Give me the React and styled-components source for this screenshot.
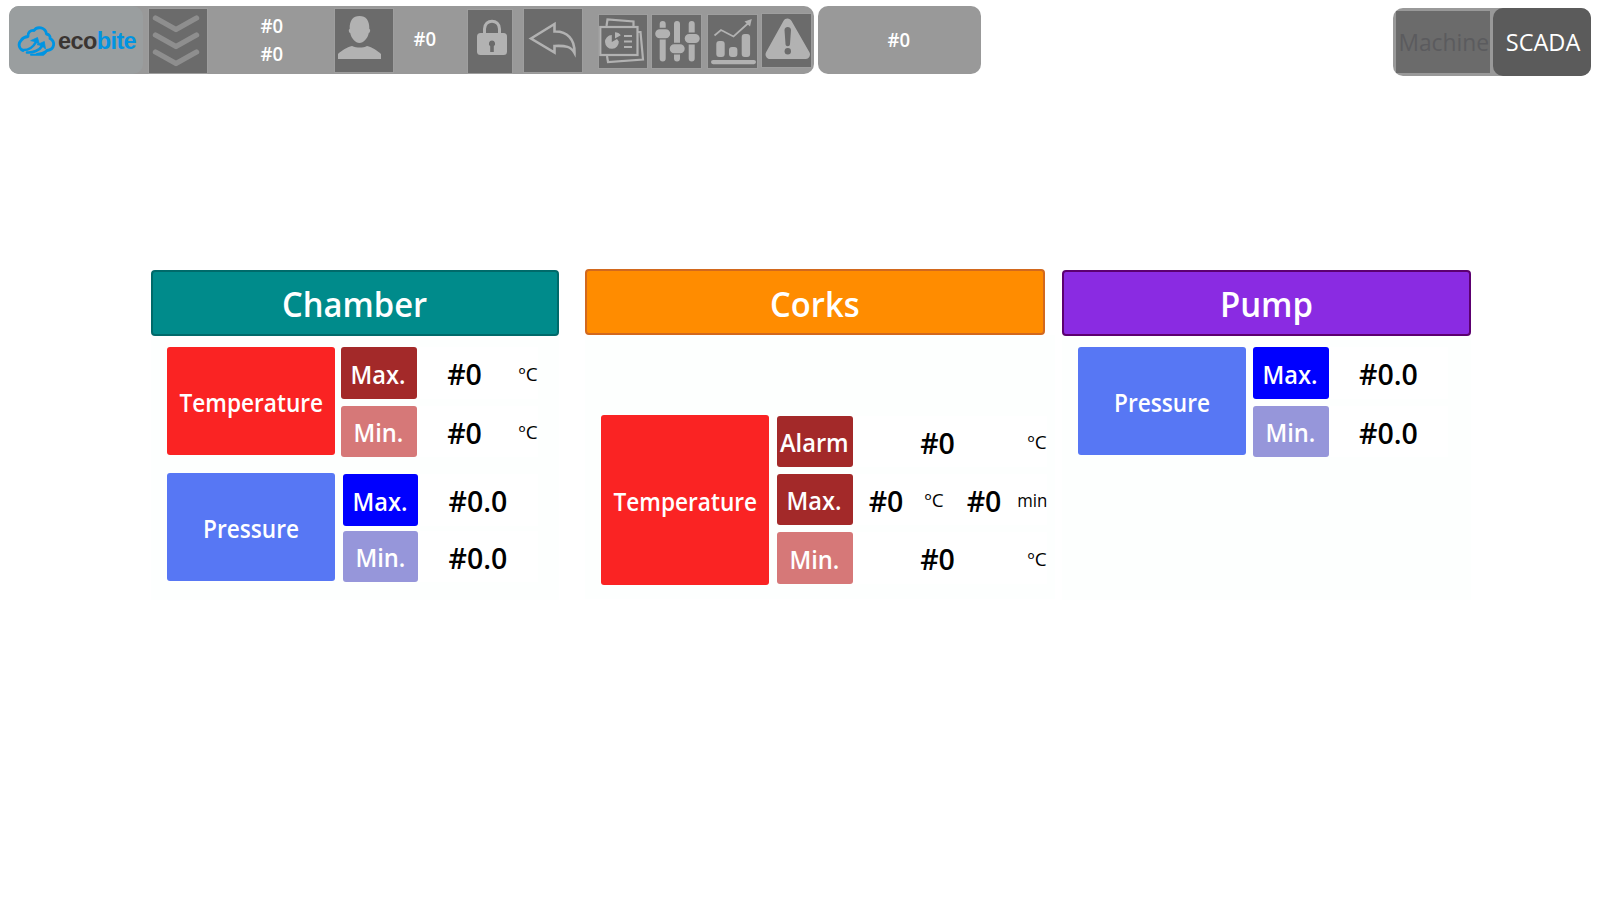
import React from "react";
import styled, { createGlobalStyle } from "styled-components";

const Global = createGlobalStyle`
  * { box-sizing: border-box; }
  body { margin: 0; background: #fff; font-family: "Open Sans", "Noto Sans", sans-serif; }
`;

const Screen = styled.div`
  width: 1600px;
  height: 900px;
  overflow: hidden;
  background: #fff;
`;

const Header = styled.header`
  display: flex;
  align-items: flex-start;
  height: 76px;
  padding: 6px 9px 0;
`;

const Bar = styled.div`
  display: flex;
  align-items: flex-start;
  width: ${(p) => p.$w}px;
  height: 68px;
  border-radius: 10px;
  background: #999;
`;

const StatusBar = styled(Bar)`
  align-items: center;
  justify-content: center;
  margin-left: 4px;
  padding-right: 2px;
`;

const Logo = styled.div`
  display: flex;
  align-items: center;
  width: 134px;
  height: 68px;
  padding-left: 8px;
  border-radius: 10px;
  background: #9a9e9f;
`;

const Wordmark = styled.span`
  margin-left: 2px;
  padding-top: 2px;
  font: bold 23.5px/28px "Liberation Sans", sans-serif;
  letter-spacing: -0.6px;
  color: #3a3532;
  b { color: #0094e2; }
`;

const IconButton = styled.button`
  flex: none;
  width: ${(p) => p.$w}px;
  height: ${(p) => p.$h}px;
  margin: ${(p) => p.$top}px 0 0 ${(p) => p.$gap}px;
  padding: 0;
  border: 0;
  background: #6b6b6b;
  box-shadow: 0 0 0 1px #9e9e9e;
  svg { display: block; }
`;

const Readout = styled.div`
  display: flex;
  flex-direction: column;
  justify-content: center;
  align-items: center;
  width: ${(p) => p.$w}px;
  height: 66px;
  padding: ${(p) => p.$top || 0}px 0 0 1px;
`;

const Text = styled.span`
  display: block;
  flex: none;
  font-size: ${(p) => p.$size}px;
  font-weight: ${(p) => p.$weight || 600};
  line-height: ${(p) => p.$line || p.$size}px;
  color: ${(p) => p.$color || "#fff"};
  white-space: nowrap;
  transform: scaleX(${(p) => p.$fit || 1});
  transform-origin: ${(p) => p.$origin || "center"};
`;

const Modes = styled.div`
  display: flex;
  width: 198px;
  height: 68px;
  margin: 2px 0 0 auto;
  border-radius: 10px;
  background: #999;
`;

const Mode = styled.button`
  display: flex;
  flex: none;
  align-items: center;
  justify-content: center;
  width: ${(p) => (p.$active ? 98 : 94)}px;
  height: ${(p) => (p.$active ? 68 : 62)}px;
  margin: ${(p) => (p.$active ? "0 0 0 3px" : "3px 0 0 3px")};
  padding: 0 0 0 2px;
  border: 0;
  border-radius: ${(p) => (p.$active ? 10 : 0)}px;
  background: ${(p) => (p.$active ? "#5b5b5b" : "#6b6b6b")};
  font-family: inherit;
`;

const Main = styled.main`
  display: flex;
  align-items: flex-start;
  padding: 193px 0 0 151px;
`;

const Panel = styled.section`
  width: ${(p) => p.$w}px;
  height: 330px;
  margin: ${(p) => p.$top}px 0 0 ${(p) => p.$gap || 0}px;
`;

const PanelTitle = styled.h2`
  display: flex;
  align-items: center;
  justify-content: center;
  height: 66px;
  margin: 0;
  padding-top: ${(p) => p.$drop}px;
  border: 2px solid ${(p) => p.$edge};
  border-radius: 4px;
  background: ${(p) => p.$fill};
`;

const PanelBody = styled.div`
  padding: ${(p) => p.$top}px 0 0 16px;
  height: 264px;
  width: ${(p) => p.$w}px;
  background: #fdfffe;
`;

const Group = styled.div`
  display: flex;
  align-items: flex-start;
  margin-bottom: 16px;
`;

const Tile = styled.div`
  display: flex;
  flex: none;
  align-items: center;
  justify-content: center;
  width: 168px;
  height: ${(p) => p.$h}px;
  padding-top: 3px;
  border-radius: 3px;
  background: ${(p) => p.$fill};
`;

const Rows = styled.div`
  display: flex;
  flex-direction: column;
  margin: ${(p) => p.$top || 0}px 0 0 ${(p) => p.$gap}px;
  gap: ${(p) => p.$space}px;
`;

const Row = styled.div`
  display: flex;
  height: ${(p) => p.$h}px;
`;

const Tag = styled.div`
  display: flex;
  flex: none;
  align-items: center;
  justify-content: center;
  width: ${(p) => p.$w}px;
  padding: 2px 1px 0 0;
  border-radius: 3px;
  background: ${(p) => p.$fill};
`;

const Cell = styled.div`
  display: flex;
  align-items: center;
  justify-content: center;
  width: ${(p) => p.$w}px;
  padding-top: 3px;
  background: #fff;
`;

const Unit = styled(Cell)`
  justify-content: flex-end;
  padding: 3px 0 0 0;
`;

const RED = "#fa2323", BROWN = "#a32929", ROSE = "#d67878";
const SKY = "#5777f4", BLUE = "#0000ff", LAVENDER = "#9696da";

const Value = ({ w, children }) => (
  <Cell $w={w}><Text $size={28.5} $color="#000" $fit={1}>{children}</Text></Cell>
);
const UnitLabel = ({ w, fit = 1.08, children }) => (
  <Unit $w={w}><Text $size={17.5} $weight={400} $color="#000" $fit={fit} $origin="right">{children}</Text></Unit>
);
const TagLabel = ({ w = 76, fill, children }) => (
  <Tag $w={w} $fill={fill}><Text $size={25} $fit={0.945}>{children}</Text></Tag>
);
const Title = ({ fill, edge, fit = 0.935, drop = 1, children }) => (
  <PanelTitle $fill={fill} $edge={edge} $drop={drop}><Text $size={35} $fit={fit}>{children}</Text></PanelTitle>
);
const Quantity = ({ h, fill, children }) => (
  <Tile $h={h} $fill={fill}><Text $size={25} $fit={0.905}>{children}</Text></Tile>
);

const CloudLogo = () => (
  <svg width="39" height="33" viewBox="0 0 39 33" fill="none" stroke="#0094e2" strokeLinecap="round" strokeLinejoin="round">
    <path strokeWidth="2.8" d="M6 26.500C1.500 24.500 1 19.500 4 16.500C5.500 14 8 12.800 11 12.500C10.500 8.500 13.500 6 17 6.500C20 2 28.500 3 29.500 10C32.500 10.500 33.500 12.500 33 14.500C38.500 17.500 38 25.500 30 26.500" />
    <path strokeWidth="2.600" d="M5 26C11 26.500 16 23.500 19 18" />
    <path strokeWidth="2.600" d="M10 28.500C16 29 22.500 26.500 25.500 21.500" />
    <path strokeWidth="2" d="M14 30.800H26C28 29.500 29.500 28 30 26.500C27 28.500 24 29.500 20 30" />
    <path fill="#0094e2" strokeWidth="0.800" d="M14 16.500L20.500 13.500L22.500 20.500L19.800 18.800L17 17.500ZM20.500 20.500L27.300 17.500L28.500 25L26.300 23L23.500 21.500Z" />
  </svg>
);

const ChevronsIcon = () => (
  <svg width="58" height="64" viewBox="0 0 58 64" fill="none" stroke="#8e8e8e" strokeWidth="5.4" strokeLinecap="round" strokeLinejoin="round">
    <path d="M6.500 9L27 20.500L47.500 9M6.500 26L27 37.500L47.500 26M6.500 43L27 54.500L47.500 43" />
  </svg>
);

const UserIcon = () => (
  <svg width="58" height="63" viewBox="0 0 58 63" fill="#b2b2b2">
    <path d="M24.500 7C31 7 34.600 11.500 34.300 20C35.700 20 35.300 23.500 33.800 24C32.700 29.500 28.500 34 24.500 34C20.500 34 16.300 29.500 15.200 24C13.700 23.500 13.300 20 14.700 20C14.400 11.500 18 7 24.500 7Z" />
    <path d="M3 50V45C6 42 12 38 17 37C22 39 28 39 32 37C37 38 43 42 46 45V50Z" />
  </svg>
);

const LockIcon = () => (
  <svg width="44" height="63" viewBox="0 0 44 63">
    <path d="M16.500 24V19C16.500 8.500 31.500 8.500 31.500 19V24" fill="none" stroke="#b2b2b2" strokeWidth="3" />
    <rect x="9" y="23" width="30" height="22" rx="3.500" fill="#b2b2b2" />
    <path d="M24 30.500a3.200 3.200 0 0 1 1.800 5.800V42h-3.600v-5.700a3.200 3.200 0 0 1 1.800-5.800Z" fill="#6b6b6b" />
  </svg>
);

const BackIcon = () => (
  <svg width="58" height="63" viewBox="0 0 58 63" fill="none" stroke="#b2b2b2" strokeWidth="2.600">
    <path d="M7 29.500L30.500 15V22.500C43 22 51 30 50.500 44C47 37.500 42 36.500 30.500 37V43.500Z" />
  </svg>
);

const ReportIcon = () => (
  <svg width="48" height="53" viewBox="0 0 48 53" fill="none" stroke="#b2b2b2" strokeWidth="2.200">
    <path d="M7.500 11L8.500 4.500L34.500 6.500V11M39 17H41.500L44 44.500L9 47L8 41" />
    <rect x="1.300" y="12" width="37.200" height="28" />
    <path d="M25 21H33M25 26.500H33M25 32H33" />
    <path d="M12.800 20V27L18 24L19.800 26.500A6.900 6.900 0 1 1 12.800 20Z" fill="#b2b2b2" stroke="none" />
    <path d="M16 23.500V17.200C18.500 17.200 20.500 18.500 21.800 20.200Z" fill="#b2b2b2" stroke="none" />
  </svg>
);

const SlidersIcon = () => (
  <svg width="49" height="53" viewBox="0 0 49 53">
    <path d="M10.700 9V43.500M25 9V43.500M39.700 9V43.500" stroke="#b2b2b2" strokeWidth="6" strokeLinecap="round" />
    <g fill="#b2b2b2" stroke="#6b6b6b" strokeWidth="1.400">
      <rect x="2.500" y="13.500" width="16.400" height="10.400" rx="5.200" />
      <rect x="17" y="28.500" width="16.400" height="10.400" rx="5.200" />
      <rect x="32" y="18.300" width="16.400" height="10.400" rx="5.200" />
    </g>
  </svg>
);

const ChartIcon = () => (
  <svg width="49" height="53" viewBox="0 0 49 53" fill="#b2b2b2">
    <rect x="8.300" y="26" width="8.400" height="16" rx="3" />
    <rect x="21" y="32" width="8.400" height="10" rx="3" />
    <rect x="33.700" y="19" width="8.400" height="23" rx="3" />
    <rect x="3" y="45" width="45" height="4.200" rx="2.100" />
    <path d="M6.500 20.500L13 15L25.500 21.500L41 7.500" fill="none" stroke="#b2b2b2" strokeWidth="1.700" />
    <path d="M43.800 4L36.500 6.500L42 11.500Z" />
  </svg>
);

const WarningIcon = () => (
  <svg width="49" height="53" viewBox="0 0 49 53">
    <path d="M25.500 9L8 40.500H43.500Z" fill="#b2b2b2" stroke="#b2b2b2" strokeWidth="9" strokeLinejoin="round" />
    <path d="M22.500 16C22.500 12 29 12 29 16L28 30C28 33 23.500 33 23.500 30Z" fill="#6b6b6b" />
    <circle cx="25.800" cy="37.300" r="3.200" fill="#6b6b6b" />
  </svg>
);

export default function App() {
  return (
    <Screen>
      <Global />
      <Header>
        <Bar $w={805}>
          <Logo><CloudLogo /><Wordmark>eco<b>bite</b></Wordmark></Logo>
          <IconButton $w={58} $h={64} $top={3} $gap={6}><ChevronsIcon /></IconButton>
          <Readout $w={128} $top={2}>
            <Text $size={19.5} $line={28} $fit={0.95}>#0</Text>
            <Text $size={19.5} $line={28} $fit={0.95}>#0</Text>
          </Readout>
          <IconButton $w={58} $h={63} $top={3} $gap={0}><UserIcon /></IconButton>
          <Readout $w={62}><Text $size={19.5} $fit={0.95}>#0</Text></Readout>
          <IconButton $w={44} $h={63} $top={4} $gap={13}><LockIcon /></IconButton>
          <IconButton $w={58} $h={63} $top={3} $gap={12}><BackIcon /></IconButton>
          <IconButton $w={48} $h={53} $top={9} $gap={17}><ReportIcon /></IconButton>
          <IconButton $w={49} $h={53} $top={9} $gap={5}><SlidersIcon /></IconButton>
          <IconButton $w={49} $h={53} $top={9} $gap={7}><ChartIcon /></IconButton>
          <IconButton $w={49} $h={53} $top={8} $gap={5}><WarningIcon /></IconButton>
        </Bar>
        <StatusBar $w={163}><Text $size={19.5} $fit={0.95}>#0</Text></StatusBar>
        <Modes>
          <Mode><Text $size={24} $weight={400} $color="#5b5b5e" $fit={0.95}>Machine</Text></Mode>
          <Mode $active><Text $size={24} $weight={400} $fit={0.98}>SCADA</Text></Mode>
        </Modes>
      </Header>
      <Main>
        <Panel $w={408} $top={1}>
          <Title fill="#008b8b" edge="#006a6a">Chamber</Title>
          <PanelBody $w={408} $top={11}>
            <Group>
              <Quantity h={108} fill={RED}>Temperature</Quantity>
              <Rows $gap={6} $space={7}>
                <Row $h={52}><TagLabel fill={BROWN}>Max.</TagLabel><Value w={95}>#0</Value><UnitLabel w={26}>ºC</UnitLabel></Row>
                <Row $h={51}><TagLabel fill={ROSE}>Min.</TagLabel><Value w={95}>#0</Value><UnitLabel w={26}>ºC</UnitLabel></Row>
              </Rows>
            </Group>
            <Group>
              <Quantity h={108} fill={SKY}>Pressure</Quantity>
              <Rows $gap={8} $top={1} $space={5}>
                <Row $h={52}><TagLabel w={75} fill={BLUE}>Max.</TagLabel><Value w={120}>#0.0</Value></Row>
                <Row $h={51}><TagLabel w={75} fill={LAVENDER}>Min.</TagLabel><Value w={120}>#0.0</Value></Row>
              </Rows>
            </Group>
          </PanelBody>
        </Panel>
        <Panel $w={460} $gap={26} $top={0}>
          <Title fill="#ff8c00" edge="#d2691e" drop={3}>Corks</Title>
          <PanelBody $w={470} $top={80}>
            <Group>
              <Quantity h={170} fill={RED}>Temperature</Quantity>
              <Rows $gap={8} $top={1} $space={7}>
                <Row $h={51}><TagLabel fill={BROWN}>Alarm</TagLabel><Value w={169}>#0</Value><UnitLabel w={25}>ºC</UnitLabel></Row>
                <Row $h={51}>
                  <TagLabel fill={BROWN}>Max.</TagLabel><Value w={66}>#0</Value><UnitLabel w={25}>ºC</UnitLabel>
                  <Value w={80}>#0</Value><UnitLabel w={23} fit={0.96}>min</UnitLabel>
                </Row>
                <Row $h={52}><TagLabel fill={ROSE}>Min.</TagLabel><Value w={169}>#0</Value><UnitLabel w={25}>ºC</UnitLabel></Row>
              </Rows>
            </Group>
          </PanelBody>
        </Panel>
        <Panel $w={409} $gap={17} $top={1}>
          <Title fill="#8a2be2" edge="#5c0070" fit={0.94}>Pump</Title>
          <PanelBody $w={409} $top={11}>
            <Group>
              <Quantity h={108} fill={SKY}>Pressure</Quantity>
              <Rows $gap={7} $space={7}>
                <Row $h={52}><TagLabel fill={BLUE}>Max.</TagLabel><Value w={119}>#0.0</Value></Row>
                <Row $h={51}><TagLabel fill={LAVENDER}>Min.</TagLabel><Value w={119}>#0.0</Value></Row>
              </Rows>
            </Group>
          </PanelBody>
        </Panel>
      </Main>
    </Screen>
  );
}
